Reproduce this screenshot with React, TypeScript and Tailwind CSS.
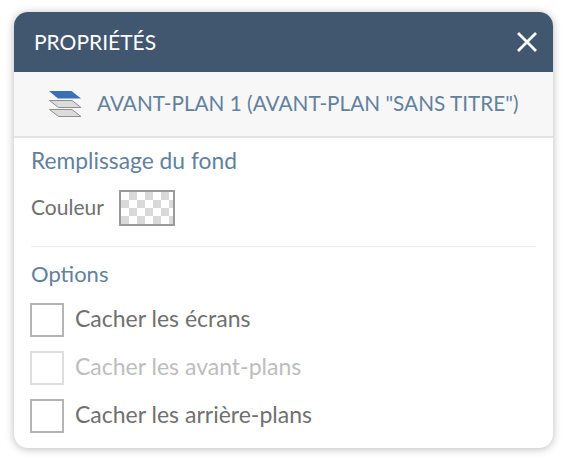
const Layers = () => (
	<svg className="w-[34px] h-[28px] shrink-0" viewBox="0 0 34 28">
		<path d="M1.5 19.5H24L33 26.5H10.5Z" fill="#dcdcdc" stroke="#8f8f8f" />
		<path d="M1.5 10.5H24L33 17.5H10.5Z" fill="#dcdcdc" stroke="#8f8f8f" />
		<path d="M1 1H23.5L33 8.5H10Z" fill="#3a70b5" />
	</svg>
);

const Checkbox = ({ label, disabled }: { label: string; disabled?: boolean }) => (
	<div className="flex items-center gap-[11px] h-[34px] -ml-px">
		<div className={`w-[34px] h-[34px] border-2 ${disabled ? 'border-[#dedede]' : 'border-[#b4b4b4]'}`}></div>
		<span className={`text-[23px] leading-none pb-[2px] ${disabled ? 'text-[#bdbdbd]' : 'text-[#707070]'}`}>{label}</span>
	</div>
);

export default function App() {
	return (
		<div className="w-[582px] h-[470px] bg-white pt-3 pl-[14px] font-['Lato','Open_Sans',sans-serif]">
			<div className="w-[539px] h-[436px] bg-white rounded-[14px] overflow-hidden shadow-[0_1px_8px_rgba(0,0,0,0.28)]">
				<div className="h-[60px] bg-[#41566f] flex items-center justify-between pl-[20px] pr-[15px]">
					<span className="text-white text-[21px]">PROPRIÉTÉS</span>
					<svg className="w-[22px] h-[22px]" viewBox="0 0 22 22">
						<path d="M2 2L20 20M20 2L2 20" stroke="white" strokeWidth="2.8" />
					</svg>
				</div>
				<div className="h-[66px] bg-[#f7f7f7] border-b-2 border-[#e2e2e2] flex items-center pl-[34px] gap-[15px]">
					<Layers />
					<span className="text-[#62819d] text-[20.75px]">AVANT-PLAN 1 (AVANT-PLAN "SANS TITRE")</span>
				</div>
				<div className="px-[17px]">
					<div className="text-[#62819d] text-[22.8px] leading-none mt-[11px]">Remplissage du fond</div>
					<div className="flex items-center gap-[15px] mt-[18px] pb-[20px] border-b border-[#ececec]">
						<span className="text-[#707070] text-[21px] pb-[2px]">Couleur</span>
						<div className="w-[56px] h-[36px] border-2 border-[#9a9a9a] bg-[conic-gradient(#d9d9d9_25%,#ffffff_0_50%,#d9d9d9_0_75%,#ffffff_0)] bg-[length:16px_16px]"></div>
					</div>
					<div className="text-[#62819d] text-[22px] leading-none mt-[16px]">Options</div>
					<div className="flex flex-col gap-[14px] mt-[18px]">
						<Checkbox label="Cacher les écrans" />
						<Checkbox label="Cacher les avant-plans" disabled />
						<Checkbox label="Cacher les arrière-plans" />
					</div>
				</div>
			</div>
		</div>
	);
}
